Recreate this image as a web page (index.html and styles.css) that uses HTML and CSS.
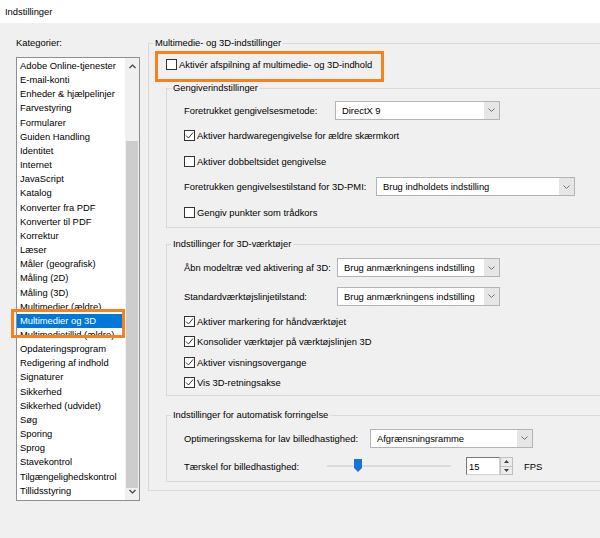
FILE: index.html
```html
<!DOCTYPE html>
<html lang="da">
<head>
<meta charset="utf-8">
<title>Indstillinger</title>
<link rel="stylesheet" href="styles.css">
</head>
<body>
<div class="titlebar">Indstillinger</div>
<div class="content">
  <div class="categories">
    <div class="cat-label">Kategorier:</div>
    <div class="listbox">
      <ul class="list">
        <li>Adobe Online-tjenester</li>
        <li>E-mail-konti</li>
        <li>Enheder &amp; hjælpelinjer</li>
        <li>Farvestyring</li>
        <li>Formularer</li>
        <li>Guiden Handling</li>
        <li>Identitet</li>
        <li>Internet</li>
        <li>JavaScript</li>
        <li>Katalog</li>
        <li>Konverter fra PDF</li>
        <li>Konverter til PDF</li>
        <li>Korrektur</li>
        <li>Læser</li>
        <li>Måler (geografisk)</li>
        <li>Måling (2D)</li>
        <li>Måling (3D)</li>
        <li>Multimedier (ældre)</li>
        <li class="selected">Multimedier og 3D</li>
        <li>Multimedietillid (ældre)</li>
        <li>Opdateringsprogram</li>
        <li>Redigering af indhold</li>
        <li>Signaturer</li>
        <li>Sikkerhed</li>
        <li>Sikkerhed (udvidet)</li>
        <li>Søg</li>
        <li>Sporing</li>
        <li>Sprog</li>
        <li>Stavekontrol</li>
        <li>Tilgængelighedskontrol</li>
        <li>Tillidsstyring</li>
      </ul>
      <div class="scrollbar">
        <div class="sb-btn sb-up"><svg width="7" height="5" viewBox="0 0 7 5"><polyline points="0.5,4 3.5,1 6.5,4" fill="none" stroke="#404040" stroke-width="1.2"/></svg></div>
        <div class="sb-track"><div class="sb-thumb"></div></div>
        <div class="sb-btn sb-down"><svg width="7" height="5" viewBox="0 0 7 5"><polyline points="0.5,1 3.5,4 6.5,1" fill="none" stroke="#404040" stroke-width="1.2"/></svg></div>
      </div>
      <div class="callout-frame"></div>
    </div>
  </div>

  <fieldset class="group outer">
    <legend>Multimedie- og 3D-indstillinger</legend>
    <div class="callout">
      <label class="check-row"><span class="box"></span><span>Aktivér afspilning af multimedie- og 3D-indhold</span></label>
    </div>

    <fieldset class="group inner render">
      <legend>Gengiverindstillinger</legend>
      <div class="rows">
        <div class="row"><span class="lbl w-render">Foretrukket gengivelsesmetode:</span><div class="combo w-165"><span class="combo-text">DirectX 9</span><span class="combo-arrow"><svg width="7" height="4" viewBox="0 0 7 4"><polyline points="0.5,0.5 3.5,3.5 6.5,0.5" fill="none" stroke="#707070" stroke-width="1"/></svg></span></div></div>
        <label class="row check-row"><span class="box checked"><svg width="9" height="9" viewBox="0 0 9 9"><polyline points="1,4.5 3.5,7 8,1.5" fill="none" stroke="#333" stroke-width="1"/></svg></span><span>Aktiver hardwaregengivelse for ældre skærmkort</span></label>
        <label class="row check-row"><span class="box"></span><span>Aktiver dobbeltsidet gengivelse</span></label>
        <div class="row"><span class="lbl w-pmi">Foretrukken gengivelsestilstand for 3D-PMI:</span><div class="combo w-199"><span class="combo-text">Brug indholdets indstilling</span><span class="combo-arrow"><svg width="7" height="4" viewBox="0 0 7 4"><polyline points="0.5,0.5 3.5,3.5 6.5,0.5" fill="none" stroke="#707070" stroke-width="1"/></svg></span></div></div>
        <label class="row check-row"><span class="box"></span><span>Gengiv punkter som trådkors</span></label>
      </div>
    </fieldset>

    <fieldset class="group inner tools">
      <legend>Indstillinger for 3D-værktøjer</legend>
      <div class="rows">
        <div class="row"><span class="lbl w-tools">Åbn modeltræ ved aktivering af 3D:</span><div class="combo w-163"><span class="combo-text">Brug anmærkningens indstilling</span><span class="combo-arrow"><svg width="7" height="4" viewBox="0 0 7 4"><polyline points="0.5,0.5 3.5,3.5 6.5,0.5" fill="none" stroke="#707070" stroke-width="1"/></svg></span></div></div>
        <div class="row row-gap"><span class="lbl w-tools">Standardværktøjslinjetilstand:</span><div class="combo w-163"><span class="combo-text">Brug anmærkningens indstilling</span><span class="combo-arrow"><svg width="7" height="4" viewBox="0 0 7 4"><polyline points="0.5,0.5 3.5,3.5 6.5,0.5" fill="none" stroke="#707070" stroke-width="1"/></svg></span></div></div>
        <div class="checks">
          <label class="row check-row tight"><span class="box checked"><svg width="9" height="9" viewBox="0 0 9 9"><polyline points="1,4.5 3.5,7 8,1.5" fill="none" stroke="#333" stroke-width="1"/></svg></span><span>Aktiver markering for håndværktøjet</span></label>
          <label class="row check-row tight"><span class="box checked"><svg width="9" height="9" viewBox="0 0 9 9"><polyline points="1,4.5 3.5,7 8,1.5" fill="none" stroke="#333" stroke-width="1"/></svg></span><span>Konsolider værktøjer på værktøjslinjen 3D</span></label>
          <label class="row check-row tight"><span class="box checked"><svg width="9" height="9" viewBox="0 0 9 9"><polyline points="1,4.5 3.5,7 8,1.5" fill="none" stroke="#333" stroke-width="1"/></svg></span><span>Aktiver visningsovergange</span></label>
          <label class="row check-row tight"><span class="box checked"><svg width="9" height="9" viewBox="0 0 9 9"><polyline points="1,4.5 3.5,7 8,1.5" fill="none" stroke="#333" stroke-width="1"/></svg></span><span>Vis 3D-retningsakse</span></label>
        </div>
      </div>
    </fieldset>

    <fieldset class="group inner degrade">
      <legend>Indstillinger for automatisk forringelse</legend>
      <div class="rows">
        <div class="row"><span class="lbl w-opt">Optimeringsskema for lav billedhastighed:</span><div class="combo w-163"><span class="combo-text">Afgrænsningsramme</span><span class="combo-arrow"><svg width="7" height="4" viewBox="0 0 7 4"><polyline points="0.5,0.5 3.5,3.5 6.5,0.5" fill="none" stroke="#707070" stroke-width="1"/></svg></span></div></div>
        <div class="row row-gap"><span class="lbl w-fps">Tærskel for billedhastighed:</span>
          <div class="slider"><div class="slider-track"></div><svg class="slider-thumb" width="8" height="13" viewBox="0 0 8 13"><path d="M0,0 H8 V9 L4,13 L0,9 Z" fill="#1a73d3"/></svg></div>
          <div class="spin"><span class="spin-input">15</span><span class="spin-btns"><span class="spin-btn"><svg width="5" height="3" viewBox="0 0 5 3"><path d="M0,3 L2.5,0 L5,3 Z" fill="#404040"/></svg></span><span class="spin-btn"><svg width="5" height="3" viewBox="0 0 5 3"><path d="M0,0 L2.5,3 L5,0 Z" fill="#404040"/></svg></span></span></div>
          <span class="fps">FPS</span>
        </div>
      </div>
    </fieldset>
  </fieldset>
</div>
</body>
</html>
```

FILE: styles.css
```css
* { box-sizing: border-box; }
html, body { margin: 0; padding: 0; }
body {
  width: 600px;
  height: 538px;
  overflow: hidden;
  background: #f0f0f0;
  font-family: "Liberation Sans", Arial, sans-serif;
  font-size: 9.4px;
  color: #000;
}
.titlebar {
  height: 23px;
  line-height: 24px;
  background: #fff;
  padding-left: 5px;
}
.content {
  display: flex;
  align-items: flex-start;
  padding: 14px 0 0 16px;
}
.categories {
  flex: none;
  width: 124px;
  display: flex;
  flex-direction: column;
  gap: 8px;
}
.cat-label { line-height: 12px; height: 12px; }
.listbox {
  position: relative;
  height: 444px;
  border: 1px solid #8a8f98;
  background: #fff;
  display: flex;
}
.list {
  list-style: none;
  margin: 0;
  padding: 1px 0 0 0;
  flex: 1;
  min-width: 0;
  overflow: hidden;
}
.list li {
  height: 14.17px;
  line-height: 14.17px;
  padding-left: 3px;
  white-space: nowrap;
  overflow: hidden;
}
.list li.selected { background: #0078d7; color: #fff; }
.scrollbar {
  flex: none;
  width: 14px;
  background: #f0f0f0;
  display: flex;
  flex-direction: column;
}
.sb-btn { display: flex; justify-content: center; }
.sb-up { height: 17px; align-items: center; }
.sb-down { height: 12px; align-items: flex-start; padding-top: 1px; }
.sb-track { flex: 1; display: flex; flex-direction: column; justify-content: flex-end; padding: 0 1px; }
.sb-thumb { height: 347px; background: #cdcdcd; }
.callout-frame {
  position: absolute;
  left: -6px;
  top: 251px;
  width: 114px;
  height: 29px;
  border: 3px solid #f5821f;
}

.group {
  margin: 0;
  min-width: 0;
  border: 1px solid #d9d9d9;
}
.group legend {
  padding: 0 2px;
  line-height: 12px;
  height: 12px;
}
.outer {
  flex: none;
  width: 480px;
  margin-left: 8px;
  padding: 0 0 8px 4px;
}
.callout {
  margin: 2px 0 0 2px;
  width: 229px;
  height: 31px;
  border: 3px solid #f5821f;
  padding-left: 8px;
}
.callout .check-row { height: 20px; }
.inner {
  margin-left: 13px;
  padding: 0 0 0 4px;
  width: 460px;
}
.render { padding-bottom: 5px; }
.render .rows { padding-top: 6px; gap: 5.5px; }
.tools { margin-top: 10px; padding-bottom: 2px; }
.tools .rows { padding-top: 7.5px; }
.degrade { margin-top: 13px; padding-bottom: 5px; }
.degrade .rows { padding-top: 7px; }
.rows {
  display: flex;
  flex-direction: column;
  padding-left: 13px;
}
.row {
  height: 20px;
  display: flex;
  align-items: center;
  white-space: nowrap;
}
.row-gap { margin-top: 8.5px; }
.degrade .row-gap { margin-top: 8px; }
.checks { margin-top: 5px; display: flex; flex-direction: column; }
.row.tight { height: 20.5px; }
.check-row { display: flex; align-items: center; gap: 2px; }
.box {
  flex: none;
  width: 11px;
  height: 11px;
  border: 1px solid #333;
  background: #fff;
  display: flex;
  align-items: center;
  justify-content: center;
}
.lbl { flex: none; }
.w-render { width: 151px; }
.w-pmi { width: 192px; }
.w-tools { width: 153px; }
.w-opt { width: 186px; }
.w-fps { width: 143px; }
.combo {
  flex: none;
  height: 19px;
  border: 1px solid #b4b4b4;
  background: #fff;
  display: flex;
  align-items: stretch;
}
.w-165 { width: 165px; }
.w-199 { width: 199px; }
.w-163 { width: 163px; }
.combo-text {
  flex: 1;
  padding-left: 6px;
  display: flex;
  align-items: center;
  overflow: hidden;
}
.combo-arrow {
  flex: none;
  width: 15px;
  background: #e6e6e6;
  display: flex;
  align-items: center;
  justify-content: center;
}
.slider {
  flex: none;
  position: relative;
  width: 124px;
  height: 20px;
  display: flex;
  align-items: center;
}
.slider-track { width: 100%; height: 2px; background: #dcdcdc; }
.slider-thumb { position: absolute; left: 27px; top: 3px; }
.spin { flex: none; display: flex; margin-left: 15px; height: 18px; }
.spin-input {
  width: 34px;
  height: 18px;
  background: #fff;
  border: 1px solid;
  border-color: #7a7a7a #d0d0d0 #d0d0d0 #7a7a7a;
  padding-left: 2px;
  display: flex;
  align-items: center;
}
.spin-btns { width: 13px; display: flex; flex-direction: column; }
.spin-btn {
  flex: 1;
  border: 1px solid #c0c0c0;
  background: #ececec;
  display: flex;
  align-items: center;
  justify-content: center;
}
.spin-btn + .spin-btn { border-top: none; }
.fps { margin-left: 11px; }
```
